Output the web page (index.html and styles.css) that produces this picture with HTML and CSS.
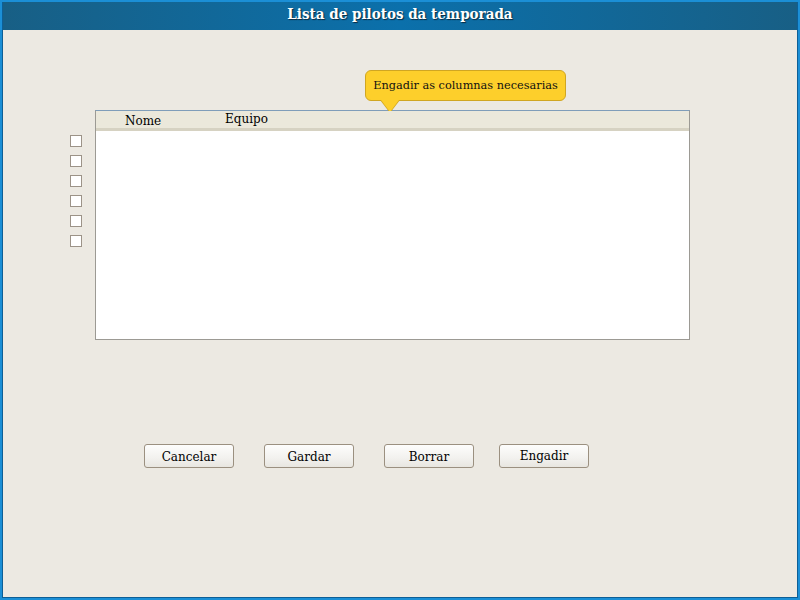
FILE: index.html
```html
<!DOCTYPE html>
<html>
<head>
<meta charset="utf-8">
<link rel="stylesheet" href="styles.css">
</head>
<body>
<div class="window">
  <div class="titlebar">Lista de pilotos da temporada</div>
  <div class="content">
    <div class="tooltip">Engadir as columnas necesarias</div>
    <div class="tablearea">
      <div class="checks">
        <span class="cb"></span><span class="cb"></span><span class="cb"></span>
        <span class="cb"></span><span class="cb"></span><span class="cb"></span>
      </div>
      <div class="table">
        <div class="thead">
          <span class="col nome">Nome</span>
          <span class="col equipo">Equipo</span>
        </div>
        <div class="tbody"></div>
      </div>
    </div>
    <div class="buttons">
      <button class="btn">Cancelar</button>
      <button class="btn">Gardar</button>
      <button class="btn">Borrar</button>
      <button class="btn up">Engadir</button>
    </div>
  </div>
</div>
</body>
</html>
```
FILE: styles.css
```css
* { box-sizing: border-box; }
html, body { margin: 0; padding: 0; }
body { width: 800px; height: 600px; font-family: "DejaVu Serif", serif; font-size: 12px; color: #000; }
.window {
  width: 800px; height: 600px;
  border: 2px solid #1b8fd6;
  box-shadow: inset 0 0 0 1px #0d5f96;
  background: #ece9e2;
  display: flex; flex-direction: column;
  position: relative;
}
.titlebar {
  height: 28px;
  margin: 0 1px;
  background: linear-gradient(to right, #185f85 0%, #0b70ab 50%, #185f85 100%);
  color: #fff; font-weight: bold; font-size: 15px;
  text-align: center; line-height: 24px;
  text-shadow: 1px 1px 1px #0a2a40;
  font-family: "DejaVu Serif Condensed", "DejaVu Serif", serif;
  font-stretch: condensed;
}
.content { flex: 1; position: relative; margin: 0 1px 1px 1px; }
.tooltip {
  position: absolute; left: 362px; top: 40px;
  width: 201px; height: 31px;
  background: #fdcf2b; border: 1px solid #d0a622; border-radius: 6px;
  font-size: 11.3px; line-height: 29px; text-align: center; color: #111;
}
.tooltip::after {
  content: ""; position: absolute; left: 15px; bottom: -12px;
  border-left: 9px solid transparent; border-right: 9px solid transparent;
  border-top: 12px solid #fdcf2b;
}
.tooltip::before {
  content: ""; position: absolute; left: 14px; bottom: -13px;
  border-left: 10px solid transparent; border-right: 10px solid transparent;
  border-top: 13px solid #d0a622;
}
.tablearea { display: flex; padding: 80px 0 0 67px; }
.checks { display: flex; flex-direction: column; gap: 8px; padding-top: 25px; width: 25px; }
.cb { width: 12px; height: 12px; border: 1px solid #9c9388; background: #fff; display: block; }
.table { width: 595px; height: 230px; border: 1px solid #9c9a94; border-top-color: #7f9db9; display: flex; flex-direction: column; }
.thead {
  height: 20px; background: #ebe8db;
  border-bottom: 3px solid #d6d2c2;
  position: relative;
}
.col { position: absolute; font-size: 12px; }
.nome { left: 29px; top: 3px; }
.equipo { left: 129px; top: 1px; }
.tbody { flex: 1; background: #fff; }
.buttons { display: flex; padding: 104px 0 0 141px; gap: 30px; }
.btn {
  width: 90px; height: 24px;
  font-family: "DejaVu Serif", serif; font-size: 12px; color: #000;
  border: 1px solid #9b9080; border-radius: 3px;
  background: linear-gradient(#fdfdfc, #f2f1ee 60%, #e8e6e0);
  padding: 1px 0 0 0; line-height: 22px;
}
.btn + .btn.up { margin-left: -5px; padding-top: 0; line-height: 20px; }
```
